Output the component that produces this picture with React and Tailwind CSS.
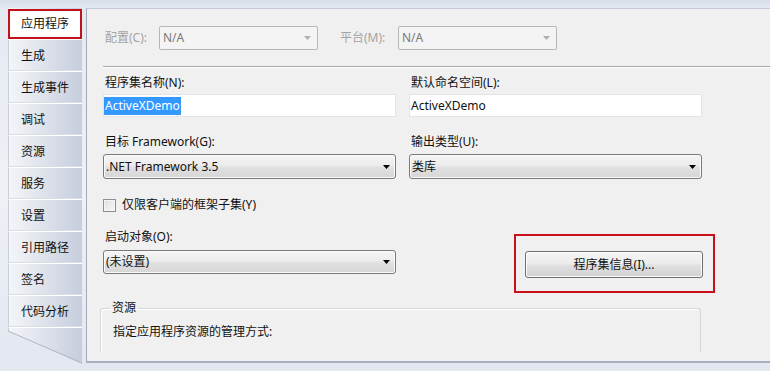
const tabs = ["应用程序", "生成", "生成事件", "调试", "资源", "服务", "设置", "引用路径", "签名", "代码分析"];

function Arrow({ color = "#000" }) {
  return (
    <svg width="7" height="4" viewBox="0 0 7 4" className="shrink-0">
      <path d="M0 0H7L3.5 4Z" fill={color} />
    </svg>
  );
}

function DisabledCombo({ text }) {
  return (
    <div className="w-[159px] h-[24px] rounded-[2px] border border-[#b4b7ba] bg-[#f4f4f4] flex items-center justify-between pl-[3px] pr-[6px] text-[#7a7a7a]">
      <span>{text}</span>
      <svg width="7" height="4" viewBox="0 0 7 4" className="shrink-0">
        <path d="M0 0H7L3.5 4Z" fill="#b0b0b0" />
      </svg>
    </div>
  );
}

function Combo({ text, h = "h-[25px]" }) {
  return (
    <div
      className={`${h} w-full rounded-[3px] border border-[#7a7a7a] bg-[linear-gradient(to_bottom,#f5f5f5,#ececec_45%,#e0e0e0_55%,#d6d6d6)] shadow-[inset_0_0_0_1px_#fafafa] flex items-center justify-between pl-[2px] pr-[5px]`}
    >
      <span>{text}</span>
      <Arrow />
    </div>
  );
}

export default function App() {
  return (
    <div className="w-[770px] h-[371px] overflow-hidden flex items-start pt-[8px] pl-[8px] bg-[linear-gradient(to_bottom,#d8dfea_0px,#e4e9f1_8px,#eef1f6_50%,#e2e7f0)] text-[12px] leading-[16px] text-[#111] font-['Noto_Sans','Noto_Sans_CJK_SC',sans-serif]">
      {/* Tabs */}
      <div className="w-[74px] flex flex-col shrink-0">
        {tabs.map((t, i) =>
          i === 0 ? (
            <div
              key={t}
              className="h-[32px] border-b border-white bg-[linear-gradient(to_right,#f3f5f8,#c6cddc)] pt-[1px]"
            >
              <div className="h-[30px] bg-white border-2 border-[#c0131b] flex items-center pl-[11px]">
                {t}
              </div>
            </div>
          ) : (
            <div
              key={t}
              className="h-[32px] border-b border-b-white border-l border-l-[#c9cedb] bg-[linear-gradient(to_right,#f3f5f8,#c6cddc)] shadow-[inset_0_-1px_0_#d9dde6] flex items-center pl-[12px]"
            >
              {t}
            </div>
          )
        )}
        <svg width="74" height="36" viewBox="0 0 74 36" className="block">
          <defs>
            <linearGradient id="tabg" x1="0" y1="0" x2="1" y2="0">
              <stop offset="0" stopColor="#f3f5f8" />
              <stop offset="1" stopColor="#c6cddc" />
            </linearGradient>
          </defs>
          <polygon points="0,0 74,0 74,36 0,3" fill="url(#tabg)" />
          <line x1="0.5" y1="0" x2="0.5" y2="3" stroke="#c9cedb" />
          <line x1="0" y1="3" x2="74" y2="35" stroke="#aeb5c5" />
        </svg>
      </div>

      {/* Panel */}
      <div className="ml-[4px] w-[684px] h-[355px] shrink-0 bg-[#f0f0f0] border-l border-t border-b-2 border-l-[#a3abba] border-t-[#c3cad6] border-b-[#a7afbf] pl-[16px] flex flex-col">
        {/* Config row */}
        <div className="mt-[17px] h-[24px] flex items-center">
          <span className="w-[56px] pl-[2px] text-[#a3a3a3]">配置(C):</span>
          <DisabledCombo text="N/A" />
          <span className="ml-[22px] w-[58px] text-[#a3a3a3]">平台(M):</span>
          <DisabledCombo text="N/A" />
        </div>
        <div className="mt-[16px] h-px bg-[#a8a8a8]" />
        <div className="h-px bg-white" />

        {/* Two columns */}
        <div className="flex gap-[13px]">
          <div className="w-[293px] flex flex-col">
            <div className="mt-[7px] h-[16px] pl-[2px]">程序集名称(N):</div>
            <div className="mt-[3px] h-[23px] bg-white border border-[#e2e4e8] flex items-center">
              <span className="bg-[#3399ff] text-white leading-[18px] px-[1px]">ActiveXDemo</span>
            </div>
            <div className="mt-[17px] h-[16px] pl-[2px]">目标 Framework(G):</div>
            <div className="mt-[4px]">
              <Combo text=".NET Framework 3.5" />
            </div>
            <div className="mt-[18px] h-[16px] flex items-center">
              <div className="w-[13px] h-[13px] border border-[#8e8f8f] bg-[linear-gradient(135deg,#dcdcdc,#fbfbfb)] shadow-[inset_0_0_0_1px_#f4f4f4]" />
              <span className="ml-[6px]">仅限客户端的框架子集(Y)</span>
            </div>
            <div className="mt-[16px] h-[16px] pl-[2px]">启动对象(O):</div>
            <div className="mt-[5px]">
              <Combo text="(未设置)" h="h-[24px]" />
            </div>
          </div>

          <div className="w-[293px] flex flex-col">
            <div className="mt-[7px] h-[16px] pl-[2px]">默认命名空间(L):</div>
            <div className="mt-[3px] h-[23px] bg-white border border-[#e2e4e8] flex items-center pl-[1px]">
              ActiveXDemo
            </div>
            <div className="mt-[17px] h-[16px] pl-[2px]">输出类型(U):</div>
            <div className="mt-[4px]">
              <Combo text="类库" />
            </div>
            <div className="mt-[55px] ml-[105px] w-[201px] h-[59px] shrink-0 border-2 border-[#c8101a] pt-[15px] pl-[9px]">
              <div className="w-[178px] h-[27px] rounded-[3px] border border-[#707070] bg-[linear-gradient(to_bottom,#f5f5f5,#ececec_45%,#dfdfdf_55%,#d2d2d2)] shadow-[inset_0_0_0_1px_#fbfbfb] flex items-center justify-center">
                程序集信息(I)...
              </div>
            </div>
          </div>
        </div>

        {/* Group box */}
        <fieldset className="mt-[7px] ml-[-3px] w-[601px] h-[52px] border border-b-0 border-[#d3d7dc] rounded-t-[3px] shadow-[inset_1px_1px_0_#ffffff]">
          <legend className="ml-[9px] px-[2px] leading-[16px]">资源</legend>
          <div className="mt-[8px] pl-[12px]">指定应用程序资源的管理方式:</div>
        </fieldset>
      </div>
    </div>
  );
}
